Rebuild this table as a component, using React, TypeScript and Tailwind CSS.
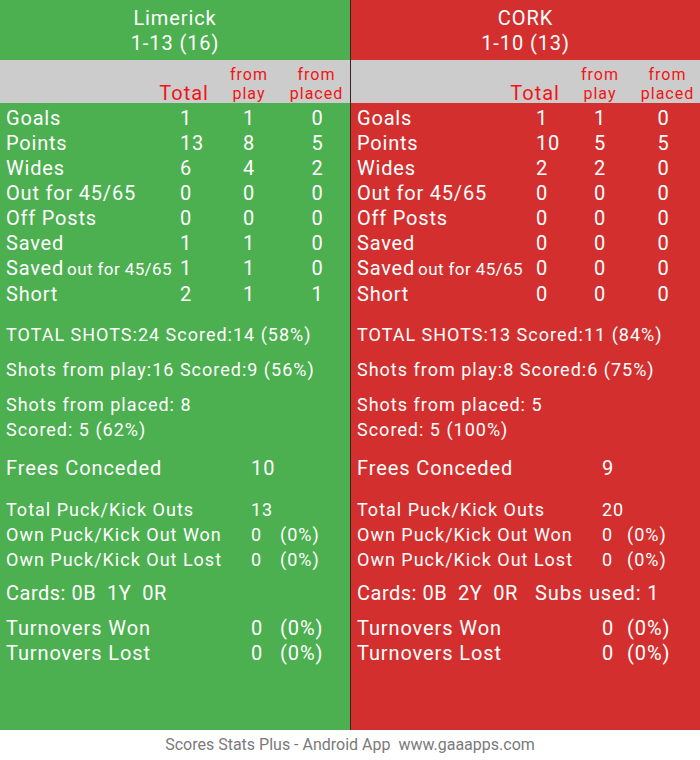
import React from 'react';

interface Team {
  name: string;
  score: string;
  bg: string;
  border: string;
  labelW: string;
  totalW: string;
  placedW: string;
  pctGap: string;
  rows: [string, string, string][];
  totalShots: string;
  playShots: string;
  placedShots: string;
  placedScored: string;
  frees: string;
  kickOuts: string;
  cards: string;
  subs?: string;
}

const rowNames = ['Goals', 'Points', 'Wides', 'Out for 45/65', 'Off Posts', 'Saved', 'SAVED_OUT', 'Short'];

const teams: Team[] = [
  {
    name: 'Limerick',
    score: '1-13 (16)',
    bg: 'bg-[#4caf50]',
    border: '',
    labelW: 'w-[180px]',
    totalW: 'w-[32px]',
    placedW: 'w-[63px]',
    pctGap: 'w-[29px]',
    rows: [
      ['1', '1', '0'],
      ['13', '8', '5'],
      ['6', '4', '2'],
      ['0', '0', '0'],
      ['0', '0', '0'],
      ['1', '1', '0'],
      ['1', '1', '0'],
      ['2', '1', '1'],
    ],
    totalShots: 'TOTAL SHOTS:24 Scored:14 (58%)',
    playShots: 'Shots from play:16 Scored:9 (56%)',
    placedShots: 'Shots from placed: 8',
    placedScored: 'Scored: 5 (62%)',
    frees: '10',
    kickOuts: '13',
    cards: 'Cards: 0B  1Y  0R',
  },
  {
    name: 'CORK',
    score: '1-10 (13)',
    bg: 'bg-[#d32f2f]',
    border: 'border-l border-[#3a2320]',
    labelW: 'w-[185px]',
    totalW: 'w-[27px]',
    placedW: 'w-[53px]',
    pctGap: 'w-[25px]',
    rows: [
      ['1', '1', '0'],
      ['10', '5', '5'],
      ['2', '2', '0'],
      ['0', '0', '0'],
      ['0', '0', '0'],
      ['0', '0', '0'],
      ['0', '0', '0'],
      ['0', '0', '0'],
    ],
    totalShots: 'TOTAL SHOTS:13 Scored:11 (84%)',
    playShots: 'Shots from play:8 Scored:6 (75%)',
    placedShots: 'Shots from placed: 5',
    placedScored: 'Scored: 5 (100%)',
    frees: '9',
    kickOuts: '20',
    cards: 'Cards: 0B  2Y  0R',
    subs: 'Subs used: 1',
  },
];

const PctRow = ({ label, value, team }: { label: string; value: string; team: Team }) => (
  <div className="flex">
    <div className="w-[245px] whitespace-nowrap">{label}</div>
    <div className={team.pctGap}>{value}</div>
    <div>(0%)</div>
  </div>
);

const TeamPanel = ({ team }: { team: Team }) => (
  <div className={`w-[350px] h-[730px] ${team.bg} ${team.border} text-white`}>
    <div className="h-[60px] pt-[6px] text-center text-[20px] leading-[25px] tracking-[0.9px]">
      <div>{team.name}</div>
      <div>{team.score}</div>
    </div>

    <div className="h-[43px] bg-[#cccccc] flex items-end text-[#f01414] tracking-[1px]">
      <div className="w-[149px]"></div>
      <div className="w-[60px] text-right text-[20px] leading-[20px]">Total</div>
      <div className="w-[80px] text-center text-[16px] leading-[19px]">
        <div>from</div>
        <div>play</div>
      </div>
      <div className="w-[55px] text-center text-[16px] leading-[19px]">
        <div>from</div>
        <div>placed</div>
      </div>
    </div>

    <div className="pt-[3px] text-[20px] leading-[25px] tracking-[0.8px]">
      {team.rows.map((r, i) => (
        <div key={i} className="flex">
          <div className={`${team.labelW} pl-[6px] whitespace-nowrap`}>
            {rowNames[i] === 'SAVED_OUT' ? (
              <>
                Saved<span className="text-[17px] ml-[3px] tracking-[0.4px]">out for 45/65</span>
              </>
            ) : (
              rowNames[i]
            )}
          </div>
          <div className={team.totalW}>{r[0]}</div>
          <div className="w-[74px] text-center">{r[1]}</div>
          <div className={`${team.placedW} text-center`}>{r[2]}</div>
        </div>
      ))}
    </div>

    <div className="pl-[6px] text-[18px] leading-[25px] tracking-[1px]">
      <div className="mt-[15px]">{team.totalShots}</div>
      <div className="mt-[10px]">{team.playShots}</div>
      <div className="mt-[10px]">{team.placedShots}</div>
      <div>{team.placedScored}</div>
    </div>

    <div className="pl-[6px] mt-[14px] text-[20px] leading-[25px] tracking-[0.9px] flex">
      <div className="w-[245px]">Frees Conceded</div>
      <div>{team.frees}</div>
    </div>

    <div className="pl-[6px] mt-[16px] text-[18px] leading-[25px] tracking-[1px]">
      <div className="flex">
        <div className="w-[245px]">Total Puck/Kick Outs</div>
        <div>{team.kickOuts}</div>
      </div>
      <PctRow label="Own Puck/Kick Out Won" value="0" team={team} />
      <PctRow label="Own Puck/Kick Out Lost" value="0" team={team} />
    </div>

    <div className="pl-[6px] mt-[9px] text-[20px] leading-[25px] tracking-[0.5px] flex whitespace-pre">
      <div className="w-[178px]">{team.cards}</div>
      {team.subs && <div className="tracking-[0.9px]">{team.subs}</div>}
    </div>

    <div className="pl-[6px] mt-[10px] text-[20px] leading-[25px] tracking-[0.9px]">
      <PctRow label="Turnovers Won" value="0" team={team} />
      <PctRow label="Turnovers Lost" value="0" team={team} />
    </div>
  </div>
);

const App: React.FC = () => {
  return (
    <div className="w-[700px] h-[760px] bg-white font-['Roboto',sans-serif]">
      <div className="flex">
        {teams.map((t) => (
          <TeamPanel key={t.name} team={t} />
        ))}
      </div>
      <div className="h-[30px] flex items-center justify-center text-[16px] text-[#7a7a7a] whitespace-pre">
        Scores Stats Plus - Android App  www.gaaapps.com
      </div>
    </div>
  );
};

export default App;
